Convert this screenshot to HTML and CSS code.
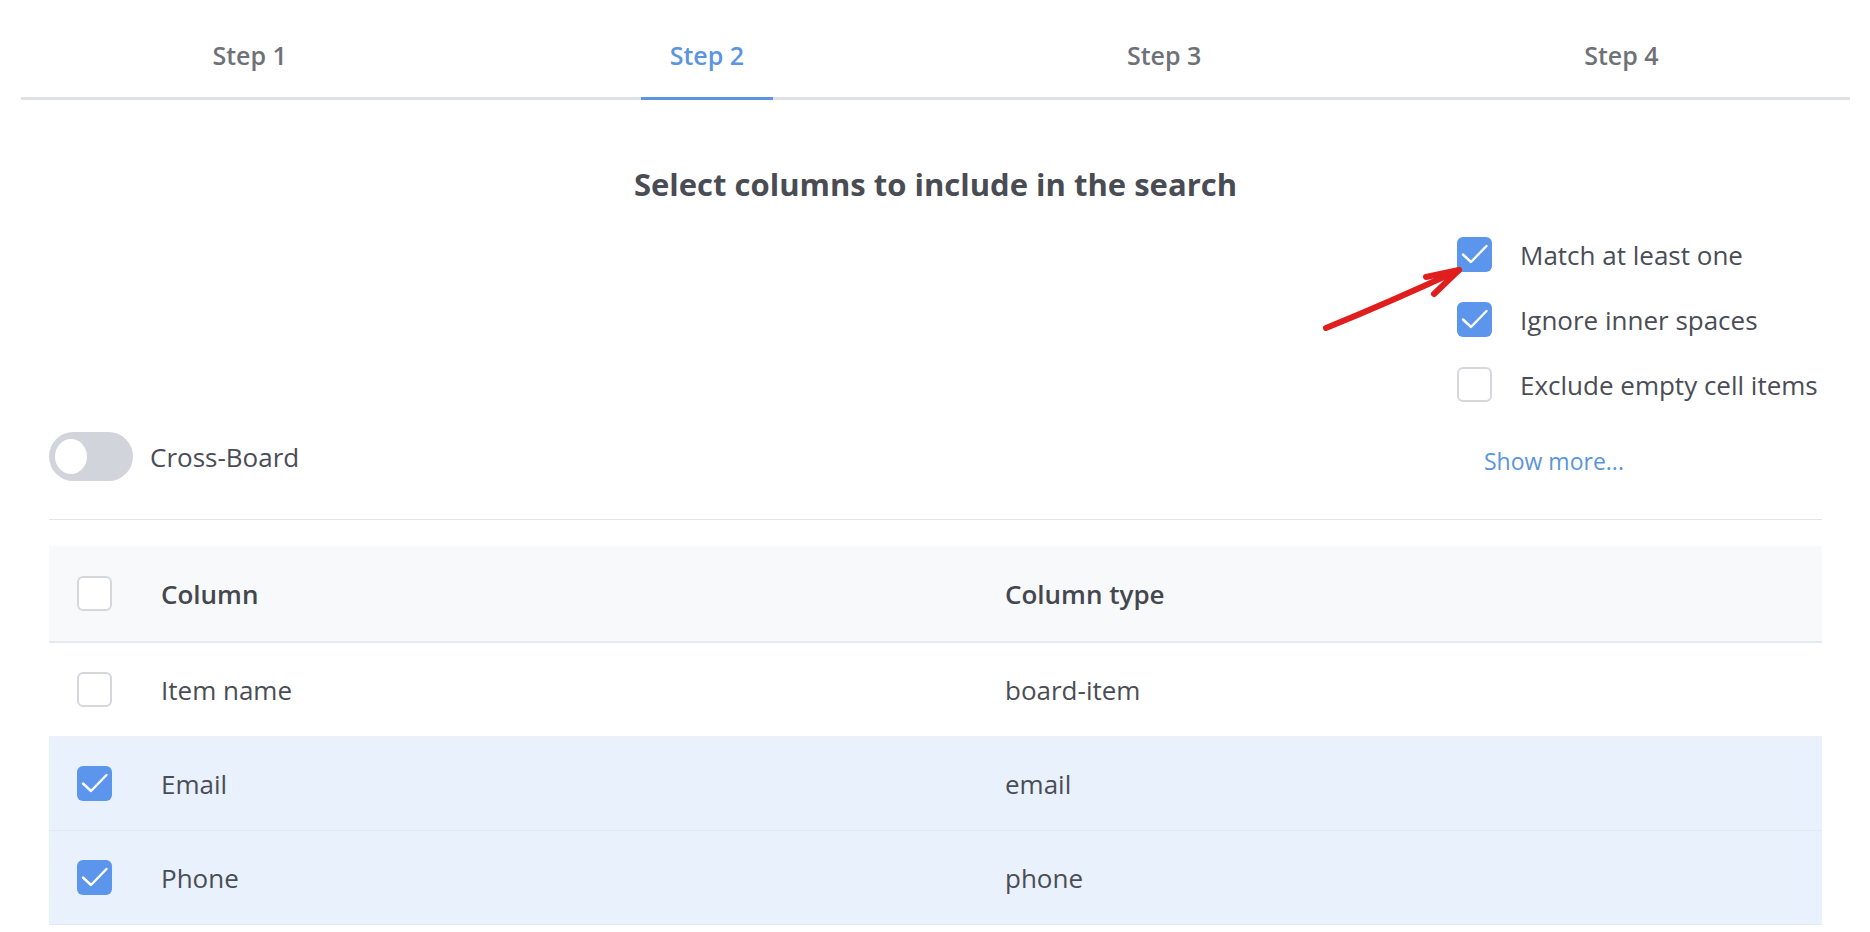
FILE: index.html
```html
<!DOCTYPE html>
<html lang="en">
<head>
    <meta charset="UTF-8">
    <title>Search columns – Step 2</title>
    <link rel="stylesheet" href="styles.css">
</head>
<body>
    <div class="tabs">
        <div class="tab"><span>Step 1</span></div>
        <div class="tab active"><span>Step 2</span></div>
        <div class="tab"><span>Step 3</span></div>
        <div class="tab"><span>Step 4</span></div>
    </div>

    <div class="content">
        <h2 class="title">Select columns to include in the search</h2>

        <div class="controls">
            <label class="switch">
                <span class="track"><span class="knob"></span></span>
                <span>Cross-Board</span>
            </label>

            <div class="options">
                <label class="option">
                    <span class="box checked"><svg viewBox="0 0 35 35"><path d="M6 17.5 L14 25 L29.5 9"/></svg></span>
                    Match at least one
                </label>
                <label class="option">
                    <span class="box checked"><svg viewBox="0 0 35 35"><path d="M6 17.5 L14 25 L29.5 9"/></svg></span>
                    Ignore inner spaces
                </label>
                <label class="option">
                    <span class="box"></span>
                    Exclude empty cell items
                </label>
                <a class="show-more" href="#">Show more...</a>
            </div>
        </div>

        <hr class="divider">

        <div class="table">
            <div class="row head">
                <div class="cell-check"><span class="box"></span></div>
                <div>Column</div>
                <div>Column type</div>
            </div>
            <div class="row">
                <div class="cell-check"><span class="box"></span></div>
                <div>Item name</div>
                <div>board-item</div>
            </div>
            <div class="row selected">
                <div class="cell-check"><span class="box checked"><svg viewBox="0 0 35 35"><path d="M6 17.5 L14 25 L29.5 9"/></svg></span></div>
                <div>Email</div>
                <div>email</div>
            </div>
            <div class="row selected">
                <div class="cell-check"><span class="box checked"><svg viewBox="0 0 35 35"><path d="M6 17.5 L14 25 L29.5 9"/></svg></span></div>
                <div>Phone</div>
                <div>phone</div>
            </div>
        </div>
    </div>

    <!-- hand-drawn annotation arrow -->
    <svg class="arrow" viewBox="0 0 150 75">
        <path d="M6 66 Q70 40 139 8"/>
        <path d="M106 15 L139 8 L114 32"/>
    </svg>
</body>
</html>
```

FILE: styles.css
```css
body { margin: 0; background: #fff; font-family: "Open Sans", "Noto Sans", sans-serif; color: #4a4d56; position: relative; overflow: hidden; }

.tabs { display: flex; margin: 0 20px 0 21px; border-bottom: 3px solid #dfe1e6; }
.tab { flex: 1; display: flex; justify-content: center; }
.tab span { display: block; padding: 38px 29px 25px; font-size: 25px; line-height: 34px; font-weight: 600; color: #6f7178; }
.tab.active span { color: #5b94e0; border-bottom: 3px solid #5b94e0; margin-bottom: -3px; }

.content { padding: 0 48px 0 49px; }
.title { margin: 64px 0 0; text-align: center; font-size: 31px; line-height: 40px; font-weight: 700; color: #4a4c54; }

.controls { display: flex; justify-content: space-between; align-items: flex-end; margin-top: 33px; }
.switch { display: flex; align-items: center; gap: 17px; font-size: 26px; }
.track { width: 84px; height: 49px; border-radius: 25px; background: #d1d4db; display: flex; align-items: center; padding-left: 6px; box-sizing: border-box; }
.knob { width: 32px; height: 35px; border-radius: 50%; background: #fff; }

.options { width: 365px; display: flex; flex-direction: column; gap: 30px; }
.option { display: flex; align-items: center; gap: 28px; height: 35px; font-size: 26px; white-space: nowrap; }
.show-more { margin: 13px 0 0 27px; padding-bottom: 4px; font-size: 23px; line-height: 32px; color: #5b94e0; text-decoration: none; }

.box { width: 35px; height: 35px; box-sizing: border-box; border: 2px solid #d5d7dc; border-radius: 6px; background: #fff; flex-shrink: 0; display: block; }
.box.checked { border: none; background: #5c95ec; }
.box svg { width: 35px; height: 35px; display: block; }
.box svg path { fill: none; stroke: #fff; stroke-width: 2.4; stroke-linecap: round; stroke-linejoin: round; }

.divider { border: none; border-top: 1px solid #e4e5e9; margin: 38px 0 0; }

.table { margin-top: 26px; }
.row { display: grid; grid-template-columns: 112px 844px 1fr; align-items: center; height: 93px; border-bottom: 1px solid #edf0f3; font-size: 26px; }
.row.head { height: 95px; background: #f8f9fb; border-bottom: 2px solid #e8e9ec; font-weight: 600; color: #45474f; }
.row.selected { background: #e8f1fc; border-bottom-color: #e0e9f4; }
.cell-check { padding-left: 28px; }

.arrow { position: absolute; left: 1320px; top: 262px; width: 150px; height: 75px; }
.arrow path { fill: none; stroke: #e01e1e; stroke-width: 6; stroke-linecap: round; stroke-linejoin: round; }
```
